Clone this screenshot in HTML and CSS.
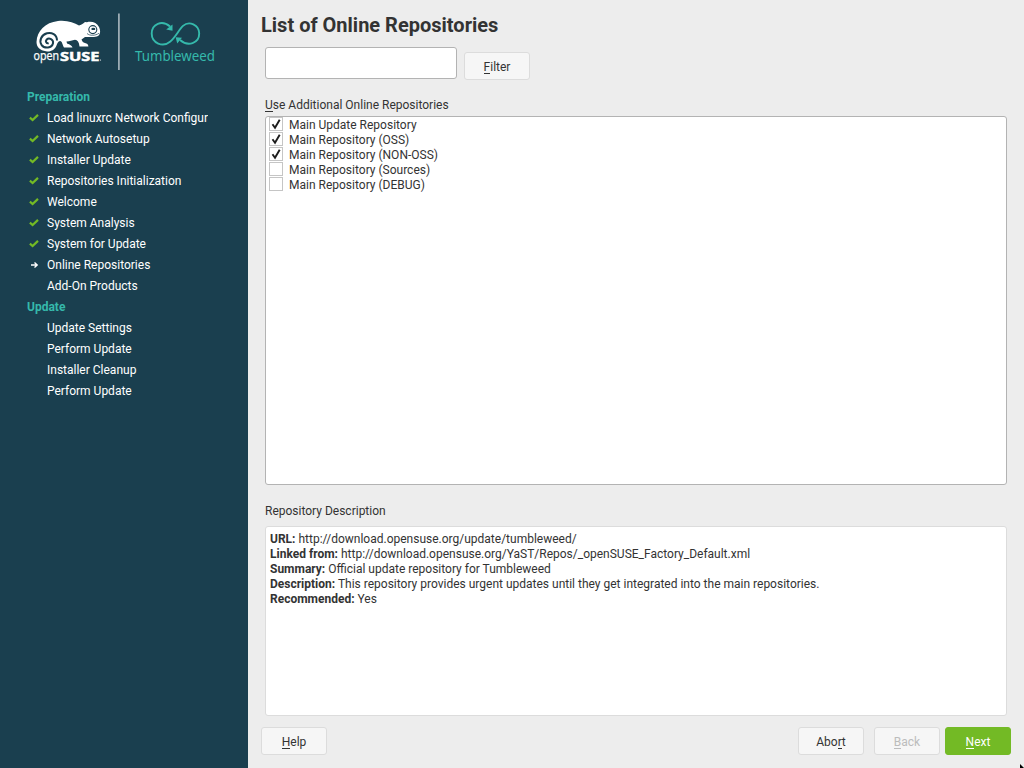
FILE: index.html
```html
<!DOCTYPE html>
<html lang="en">
<head>
<meta charset="utf-8">
<title>List of Online Repositories</title>
<link rel="stylesheet" href="styles.css">
</head>
<body>
<svg class="defs" width="0" height="0">
  <symbol id="check" viewBox="0 0 10 8"><path d="M.9 3.600 3.600 6 9 .9" fill="none" stroke="#73ba25" stroke-width="2.200"/></symbol>
  <symbol id="arrow" viewBox="0 0 10 8"><path d="M2 4H8M5.500 1.500 8.200 4 5.500 6.500" fill="none" stroke="#fff" stroke-width="1.400"/></symbol>
  <symbol id="tick" viewBox="0 0 12 12"><path d="M2.500 6.300 5 9.700 9.700 1.700" fill="none" stroke="#1c1c1c" stroke-width="1.900"/></symbol>
</svg>
<div class="screen">
  <aside class="sidebar">
    <svg class="logo" viewBox="0 0 248 86" width="248" height="86">
      <path fill="#fff" d="M36.500 42C37 31 45 22.500 58 21C67 20 74 22.500 79 25.500C81 25 83 24 85 22L87 22.200C92 21 97 23 99 27C100.500 30 100.800 34 98 36C94 38 89 36.500 85 37L81.500 39.500C82 41 83 42.500 85 43C87 43.300 88.400 44.500 88.400 46.500H79.500C79 42 77.500 39.800 75 39.800C72 40.200 70 41.500 66.500 41.500L67 43.500C70 44.500 72 45.500 72.500 47.500H64C62 44 62.500 41.500 60 41C58 41.500 57.500 43 56.500 45.500C55 50 50 52.300 46 51.300C40 50.500 36.500 47 36.500 42Z"/>
      <path fill="none" stroke="#1a3f4f" stroke-width="2" d="M57 40.500C57 34.500 51.500 32 47 33.300C41 35 39 41 41.500 44.800C44.500 49 52 48.300 53 43.300C53.800 39.300 49 37.300 46.700 39.500C45 41.500 46.500 43.900 48.700 43.200"/>
      <circle cx="92.800" cy="29.600" r="4" fill="#fff" stroke="#1a3f4f" stroke-width="1.100"/>
      <ellipse cx="93.300" cy="28.900" rx="2" ry="1.200" fill="#1a3f4f"/>
      <path d="M87 33.500C90 36 95 35.800 99 33.300" fill="none" stroke="#1a3f4f" stroke-width=".7"/>
      <text class="brand-open" x="33.500" y="60" textLength="25.500" lengthAdjust="spacingAndGlyphs">open</text>
      <text class="brand-suse" x="60" y="60.500" textLength="39.500" lengthAdjust="spacingAndGlyphs">SUSE</text>
      <circle cx="100.500" cy="60" r=".6" fill="#fff"/>
      <path d="M118.900 13.500V70" stroke="#a3b2b9" stroke-width="1.700"/>
      <path fill="none" stroke="#35b9ab" stroke-width="1.900" d="M170 26.500C162 19.500 151.700 24 151.700 33.600C151.700 43.500 163 47.500 170 41.700C175 38 179 29.500 183 25.900C189 20.500 199.200 24.500 199.200 33.600C199.200 43.500 188 47 180 40"/>
      <path fill="#35b9ab" d="M172.500 24.500V30.800L166.200 29.500ZM175.700 37.300 182 37.800 177.200 43.500Z"/>
      <text class="brand-tw" x="135" y="61.300" textLength="80" lengthAdjust="spacingAndGlyphs">Tumbleweed</text>
    </svg>
    <nav class="steps">
      <h2 class="stage">Preparation</h2>
      <div class="step"><svg class="mark"><use href="#check"/></svg><span class="label">Load linuxrc Network Configuration</span></div>
      <div class="step"><svg class="mark"><use href="#check"/></svg><span class="label">Network Autosetup</span></div>
      <div class="step"><svg class="mark"><use href="#check"/></svg><span class="label">Installer Update</span></div>
      <div class="step"><svg class="mark"><use href="#check"/></svg><span class="label">Repositories Initialization</span></div>
      <div class="step"><svg class="mark"><use href="#check"/></svg><span class="label">Welcome</span></div>
      <div class="step"><svg class="mark"><use href="#check"/></svg><span class="label">System Analysis</span></div>
      <div class="step"><svg class="mark"><use href="#check"/></svg><span class="label">System for Update</span></div>
      <div class="step"><svg class="mark"><use href="#arrow"/></svg><span class="label">Online Repositories</span></div>
      <div class="step"><span class="mark"></span><span class="label">Add-On Products</span></div>
      <h2 class="stage">Update</h2>
      <div class="step"><span class="mark"></span><span class="label">Update Settings</span></div>
      <div class="step"><span class="mark"></span><span class="label">Perform Update</span></div>
      <div class="step"><span class="mark"></span><span class="label">Installer Cleanup</span></div>
      <div class="step"><span class="mark"></span><span class="label">Perform Update</span></div>
    </nav>
  </aside>
  <main class="content">
    <h1 class="title">List of Online Repositories</h1>
    <div class="filter">
      <input class="search" type="text" aria-label="Filter">
      <button class="btn"><span class="key">F</span>ilter</button>
    </div>
    <div class="caption caption-list"><span class="key">U</span>se Additional Online Repositories</div>
    <div class="repos">
      <div class="repo"><span class="box"><svg class="tick"><use href="#tick"/></svg></span><span class="name">Main Update Repository</span></div>
      <div class="repo"><span class="box"><svg class="tick"><use href="#tick"/></svg></span><span class="name">Main Repository (OSS)</span></div>
      <div class="repo"><span class="box"><svg class="tick"><use href="#tick"/></svg></span><span class="name">Main Repository (NON-OSS)</span></div>
      <div class="repo"><span class="box"></span><span class="name">Main Repository (Sources)</span></div>
      <div class="repo"><span class="box"></span><span class="name">Main Repository (DEBUG)</span></div>
    </div>
    <div class="caption caption-desc">Repository Description</div>
    <div class="description">
      <div><b>URL:</b> http://download.opensuse.org/update/tumbleweed/</div>
      <div><b>Linked from:</b> http://download.opensuse.org/YaST/Repos/_openSUSE_Factory_Default.xml</div>
      <div><b>Summary:</b> Official update repository for Tumbleweed</div>
      <div><b>Description:</b> This repository provides urgent updates until they get integrated into the main repositories.</div>
      <div><b>Recommended:</b> Yes</div>
    </div>
    <footer class="actions">
      <button class="btn help"><span class="key">H</span>elp</button>
      <button class="btn abort">Abo<span class="key">r</span>t</button>
      <button class="btn back" disabled><span class="key">B</span>ack</button>
      <button class="btn next"><span class="key">N</span>ext</button>
    </footer>
  </main>
  <svg class="pointer" width="4" height="4" viewBox="0 0 4 4"><path d="M0 0 4 4H0Z" fill="#000"/></svg>
</div>
</body>
</html>
```
FILE: styles.css
```css
* { box-sizing: border-box; }
body { margin: 0; font: 12px/15px Roboto, "Liberation Sans", sans-serif; color: #333; }
.defs { position: absolute; }
.screen { position: relative; display: flex; width: 1024px; height: 768px; overflow: hidden; background: #ededed; }
.sidebar { width: 248px; flex: none; background: #1a3f4f; color: #fff; }
.logo { display: block; }
.brand-open { font: 12.5px "Open Sans", sans-serif; fill: #fff; stroke: #fff; stroke-width: .25; }
.brand-suse { font: bold 13px "Open Sans", sans-serif; fill: #fff; stroke: #fff; stroke-width: .5; }
.brand-tw { font: 14px "Noto Sans", sans-serif; fill: #35b9ab; }
.steps { padding: 1px 40px 0 27px; }
.stage { margin: 0; font-size: 12px; font-weight: 700; line-height: 21px; color: #35b9ab; }
.step { display: flex; align-items: center; height: 21px; }
.mark { width: 10px; height: 8px; margin: 0 8px 1px 2px; flex: none; }
.label { width: 161px; overflow: hidden; white-space: nowrap; line-height: 21px; }
.content { display: flex; flex: 1; flex-direction: column; padding: 11px 13px 13px; }
.title { margin: 0; font-size: 20px; font-weight: 700; line-height: 28px; }
.filter { display: flex; gap: 7px; height: 33px; margin: 8px 4px 0; align-items: flex-start; }
.search { width: 192px; height: 32px; padding: 0 6px; border: 1px solid #b3b3b3; border-radius: 3px; background: #fff; font: inherit; }
.btn { width: 66px; height: 28px; padding: 2px 0 0; border: 1px solid #dcdcdc; border-radius: 3px; background: #f6f6f6; color: #333; font: inherit; line-height: 15px; }
.filter .btn { margin-top: 5px; }
.key { display: inline-block; background: linear-gradient(currentColor, currentColor) 0 13px / 100% 1px no-repeat; }
.caption { margin: 0 4px; height: 15px; }
.caption-list { margin-top: 18px; }
.repos { height: 369px; margin: 3px 4px 0; padding: 0 3px; border: 1px solid #b3b3b3; border-radius: 3px; background: #fff; }
.repo { display: flex; height: 15px; gap: 6px; }
.name { padding-top: 1px; }
.box { display: flex; width: 14px; height: 14px; border: 1px solid #c5c5c5; background: #fff; }
.tick { width: 12px; height: 12px; }
.caption-desc { margin-top: 19px; }
.description { height: 190px; margin: 7px 4px 0; padding: 5px 4px 4px; border: 1px solid #dcdcdc; border-radius: 3px; background: #fff; }
.actions { display: flex; margin-top: 11px; }
.abort { margin-left: auto; }
.back { margin-left: 10px; color: #bcbcbc; }
.btn.back { color: #bcbcbc; }
.next { margin-left: 5px; border-color: #73ba25; background: #73ba25; color: #fff; }
.pointer { position: absolute; right: 0; bottom: 0; }
```
